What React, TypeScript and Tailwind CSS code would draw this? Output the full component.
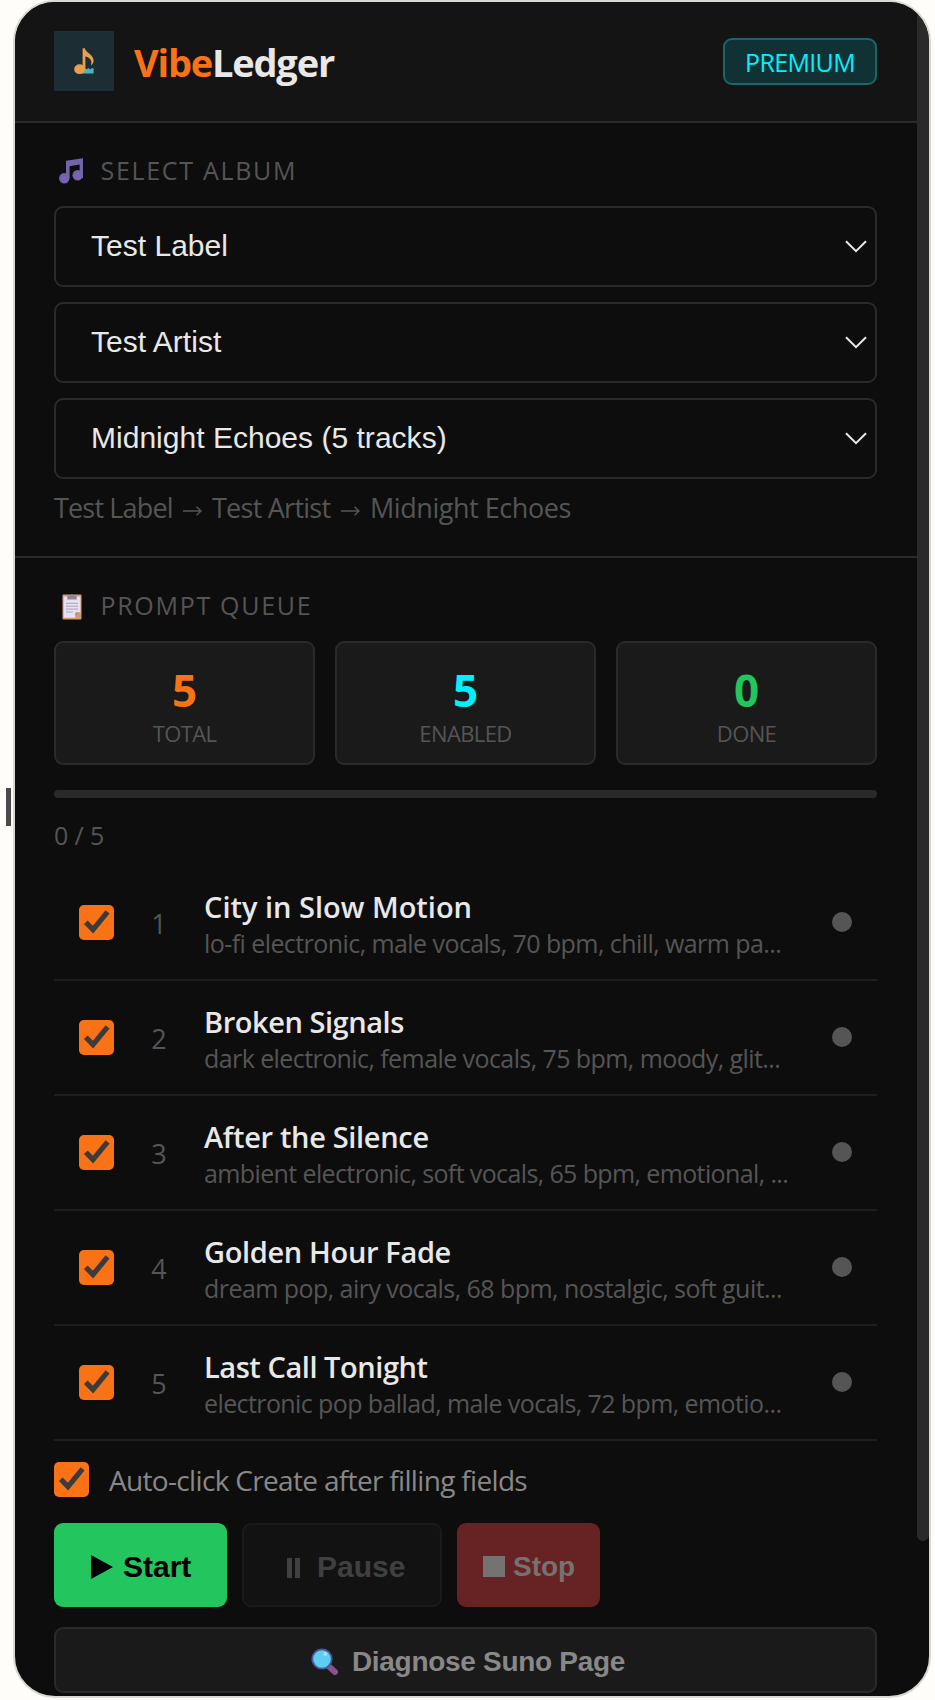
import { useState } from "react";
import clsx from "clsx";

type Track = {
  title: string;
  style: string;
  titleTracking: string;
  styleTracking: string;
};

const tracks: Track[] = [
  {
    title: "City in Slow Motion",
    style: "lo-fi electronic, male vocals, 70 bpm, chill, warm pa...",
    titleTracking: "tracking-[0px]",
    styleTracking: "tracking-[-0.57px]",
  },
  {
    title: "Broken Signals",
    style: "dark electronic, female vocals, 75 bpm, moody, glit...",
    titleTracking: "tracking-[-0.45px]",
    styleTracking: "tracking-[-0.58px]",
  },
  {
    title: "After the Silence",
    style: "ambient electronic, soft vocals, 65 bpm, emotional, ...",
    titleTracking: "tracking-[-0.33px]",
    styleTracking: "tracking-[-0.62px]",
  },
  {
    title: "Golden Hour Fade",
    style: "dream pop, airy vocals, 68 bpm, nostalgic, soft guit...",
    titleTracking: "tracking-[-0.35px]",
    styleTracking: "tracking-[-0.55px]",
  },
  {
    title: "Last Call Tonight",
    style: "electronic pop ballad, male vocals, 72 bpm, emotio...",
    titleTracking: "tracking-[-0.45px]",
    styleTracking: "tracking-[-0.6px]",
  },
];

const stats = [
  { value: 5, label: "TOTAL", color: "text-[#f97316]" },
  { value: 5, label: "ENABLED", color: "text-[#00f0ff]" },
  { value: 0, label: "DONE", color: "text-[#22c55e]" },
];

const selects = ["Test Label", "Test Artist", "Midnight Echoes (5 tracks)"];

function LogoIcon() {
  return (
    <svg viewBox="0 0 60 60" className="-mt-0.5 h-[60px] w-[60px] shrink-0">
      <rect width="60" height="60" fill="#1c2e34" />
      <path
        d="M27 42.6h12.6v-5l-1.6-.6-1.8 1.6-1.6-1.6-2 1.2-1.8-1.2z"
        fill="#4bb5b9"
      />
      <ellipse cx="25.6" cy="38.2" rx="5.4" ry="4.9" fill="#eb9f4b" />
      <path
        d="M28.6 17.3h2.2c.8 4.5 8.8 6.2 8.8 12.2 0 2-1 4-2.8 5 .9-2.2.9-4.9-.8-6.5-1.4-1.5-3-2.1-4.6-2.4V38h-2.8z"
        fill="#eb9f4b"
      />
    </svg>
  );
}

function NotesIcon() {
  return (
    <svg viewBox="0 0 24 26" className="mt-0.5 h-[26px] w-6">
      <path d="M7 2.8 24 .3v19.7h-3.4V6.6l-10 1.6V20H7z" fill="#7164a8" />
      <circle cx="5.3" cy="20.3" r="5.2" fill="#7164a8" />
      <circle cx="18.7" cy="17.3" r="5.2" fill="#7164a8" />
      <circle cx="6" cy="20.8" r="2.6" fill="#7d63bd" />
      <circle cx="19.4" cy="17.8" r="2.6" fill="#7d63bd" />
    </svg>
  );
}

function ClipboardIcon() {
  return (
    <svg viewBox="0 0 20 26" className="mt-[3px] h-[26px] w-5">
      <rect x="0.5" y="0.5" width="19" height="25" rx="1" fill="#d39a70" />
      <path d="M1.6 2.4h16.8v15.8l-5.2 5.6H1.6z" fill="#e8e1f2" />
      <path d="M13.2 23.8l5.2-5.6h-4.2c-.6 0-1 .4-1 1z" fill="#c98d68" />
      <path d="M5.3 2h2.5a2.2 1.8 0 0 1 4.4 0h2.5v3.6H5.3z" fill="#8d8594" />
      <path d="M4 9.3h12M4 12.2h12M4 15.1h12M4 18h7" stroke="#a9a2b8" strokeWidth="1" />
    </svg>
  );
}

function SearchIcon() {
  return (
    <svg viewBox="0 0 28 28" className="h-7 w-7">
      <path d="m17.5 18 6.5 6" stroke="#8d4f8d" strokeWidth="6" strokeLinecap="round" />
      <circle cx="11" cy="11" r="9.7" fill="#5fcdf0" stroke="#46589b" strokeWidth="1.8" />
      <circle cx="14.3" cy="6" r="2" fill="#a5e0f5" />
    </svg>
  );
}

function ArrowIcon() {
  return (
    <svg viewBox="0 0 19 10" className="mx-2.5 mt-1.5 h-2.5 w-[19px]">
      <path d="M0 5h18M13.5 .8 18 5l-4.5 4.2" fill="none" stroke="#555" strokeWidth="1.5" />
    </svg>
  );
}

function CheckBox({ checked, onClick }: { checked: boolean; onClick: () => void }) {
  return (
    <button
      type="button"
      role="checkbox"
      aria-checked={checked}
      onClick={onClick}
      className={clsx(
        "h-[35px] w-[35px] shrink-0 rounded-[5px]",
        checked ? "bg-[#f97316]" : "border-2 border-[#555]",
      )}
    >
      {checked && (
        <svg viewBox="0 0 35 35" className="h-full w-full">
          <path d="m6.8 17.2 7.2 7.4L28.6 6.9" fill="none" stroke="#3b3b3b" strokeWidth="5.2" />
        </svg>
      )}
    </button>
  );
}

function SelectBox({ value }: { value: string }) {
  return (
    <div className="flex h-[81px] items-center justify-between rounded-[9px] border-2 border-[#2a2a2a] pr-2 pl-[35px]">
      <span className="pb-px font-['Liberation_Sans',Arial,sans-serif] text-[30px] leading-[34px] tracking-[0.02px] text-[#e8e8e8]">
        {value}
      </span>
      <svg viewBox="0 0 22 13" className="h-[13px] w-[22px]">
        <path d="m1 1.2 10 10 10-10" fill="none" stroke="#e8e8e8" strokeWidth="2" />
      </svg>
    </div>
  );
}

export default function App() {
  const [enabled, setEnabled] = useState(tracks.map(() => true));
  const [autoClick, setAutoClick] = useState(true);

  const toggle = (index: number) =>
    setEnabled((current) => current.map((on, i) => (i === index ? !on : on)));

  return (
    <div className="flex h-[1700px] w-[935px] items-start overflow-hidden bg-[#fefdf9] font-['Open_Sans','Noto_Sans',sans-serif] whitespace-nowrap">
      <div className="mt-[788px] ml-1.5 h-[38px] w-[5px] shrink-0 bg-[#4a4a4a]" />

      <div className="ml-0.5 flex h-[1698px] w-[918px] shrink-0 overflow-hidden rounded-[42px] border-2 border-[#d9d9d4] bg-[#0d0d0d]">
        <main className="w-[902px] shrink-0">
          <header className="flex h-[121px] items-center border-b-2 border-[#2a2a2a] bg-[#141414] pr-10 pl-[39px]">
            <LogoIcon />
            <h1 className="mt-px ml-5 text-[38px] leading-[48px] font-bold tracking-[-1.2px] text-[#e8e8e8]">
              <span className="text-[#f97316]">Vibe</span>Ledger
            </h1>
            <span className="ml-auto flex h-[47px] w-[154px] items-center justify-center rounded-[9px] border-2 border-[#1c6669] bg-[#113234] pt-px text-[25px] leading-[34px] tracking-[-0.65px] text-[#00f0ff]">
              PREMIUM
            </span>
          </header>

          <section className="h-[435px] border-b-2 border-[#2a2a2a] pt-8 pr-10 pl-[39px]">
            <h2 className="mb-[21px] flex h-[30px] items-center pl-[5px] text-[25px] leading-[30px] tracking-[1.7px] text-[#555]">
              <NotesIcon />
              <span className="ml-[17.5px]">SELECT ALBUM</span>
            </h2>
            <div className="flex flex-col gap-[15px]">
              {selects.map((value) => (
                <SelectBox key={value} value={value} />
              ))}
            </div>
            <p className="mt-2.5 flex items-center text-[27px] leading-[38px] text-[#555]">
              <span className="w-[119px] tracking-[-0.84px]">Test Label</span>
              <ArrowIcon />
              <span className="w-[119px] tracking-[-0.75px]">Test Artist</span>
              <ArrowIcon />
              <span className="tracking-[-0.45px]">Midnight Echoes</span>
            </p>
          </section>

          <section className="pt-8 pr-10 pl-[39px]">
            <h2 className="mb-[21px] flex h-[30px] items-center pl-2 text-[25px] leading-[30px] tracking-[1.7px] text-[#555]">
              <ClipboardIcon />
              <span className="ml-[18.5px]">PROMPT QUEUE</span>
            </h2>

            <div className="grid grid-cols-3 gap-5">
              {stats.map((stat) => (
                <div
                  key={stat.label}
                  className="h-[124px] rounded-[9px] border-2 border-[#2a2a2a] bg-[#1a1a1a] pt-[25px] text-center"
                >
                  <div className={clsx("text-[44px] leading-[44px] font-bold", stat.color)}>
                    {stat.value}
                  </div>
                  <div className="mt-[7px] text-[22px] leading-7 tracking-[-0.6px] text-[#555]">
                    {stat.label}
                  </div>
                </div>
              ))}
            </div>

            <div className="mt-[25px] h-2 rounded-full bg-[#2a2a2a]" />
            <p className="mt-5 text-[25px] leading-[34px] tracking-[-0.1px] text-[#555]">0 / 5</p>

            <ul className="mt-3.5">
              {tracks.map((track, i) => (
                <li
                  key={track.title}
                  className="flex h-[115px] items-center border-b-2 border-[#1e1e1e] px-[25px]"
                >
                  <CheckBox checked={enabled[i]} onClick={() => toggle(i)} />
                  <span className="w-[90px] shrink-0 pt-0.5 text-center text-[27px] leading-9 text-[#555]">
                    {i + 1}
                  </span>
                  <div className="min-w-0 flex-1 pt-[5px]">
                    <div
                      className={clsx(
                        "text-[29px] leading-9 font-semibold text-[#e8e8e8]",
                        track.titleTracking,
                      )}
                    >
                      {track.title}
                    </div>
                    <div className={clsx("text-[25px] leading-9 text-[#555]", track.styleTracking)}>
                      {track.style}
                    </div>
                  </div>
                  <span className="mb-0.5 h-5 w-5 shrink-0 rounded-full bg-[#555]" />
                </li>
              ))}
            </ul>

            <label className="mt-[21px] flex h-[35px] items-center">
              <CheckBox checked={autoClick} onClick={() => setAutoClick(!autoClick)} />
              <span className="ml-5 pt-0.5 text-[28px] leading-[35px] tracking-[-0.67px] text-[#888]">
                Auto-click Create after filling fields
              </span>
            </label>

            <div className="mt-[26px] flex h-[84px] gap-[15px] font-['Liberation_Sans',Arial,sans-serif] font-bold">
              <button
                type="button"
                className="flex w-[173px] items-center rounded-[9px] bg-[#22c55e] pt-1 pl-[37px] text-[30px] leading-[34px] text-black"
              >
                <svg viewBox="0 0 22 24" className="h-6 w-[22px]">
                  <path d="M0 0v24l22-12z" fill="currentColor" />
                </svg>
                <span className="ml-2.5">Start</span>
              </button>
              <button
                type="button"
                disabled
                className="flex w-[200px] items-center rounded-[9px] border-2 border-[#1a1a1a] bg-[#121212] pt-1 pl-[43px] text-[30px] leading-[34px] text-[#404040]"
              >
                <svg viewBox="0 0 13 20" className="mt-0.5 h-5 w-[13px]">
                  <path d="M0 0h5v20H0zM8 0h5v20H8z" fill="currentColor" />
                </svg>
                <span className="ml-[17px]">Pause</span>
              </button>
              <button
                type="button"
                disabled
                className="flex w-[143px] items-center rounded-[9px] bg-[#672224] pt-[3px] pl-[26px] text-[28px] leading-[34px] text-[#757272]"
              >
                <span className="h-[21px] w-[22px] bg-current" />
                <span className="ml-2">Stop</span>
              </button>
            </div>

            <button
              type="button"
              className="mt-5 flex h-[66px] w-full items-center justify-center rounded-[9px] border-2 border-[#2a2a2a] bg-[#1a1a1a] pt-1 pl-[5px] font-['Liberation_Sans',Arial,sans-serif] text-[28px] leading-[34px] font-bold tracking-[-0.3px] text-[#888]"
            >
              <SearchIcon />
              <span className="ml-[13px]">Diagnose Suno Page</span>
            </button>
          </section>
        </main>

        <div className="h-[1539px] w-3 shrink-0 rounded-b-full bg-[#2a2a2a]" />
      </div>
    </div>
  );
}
